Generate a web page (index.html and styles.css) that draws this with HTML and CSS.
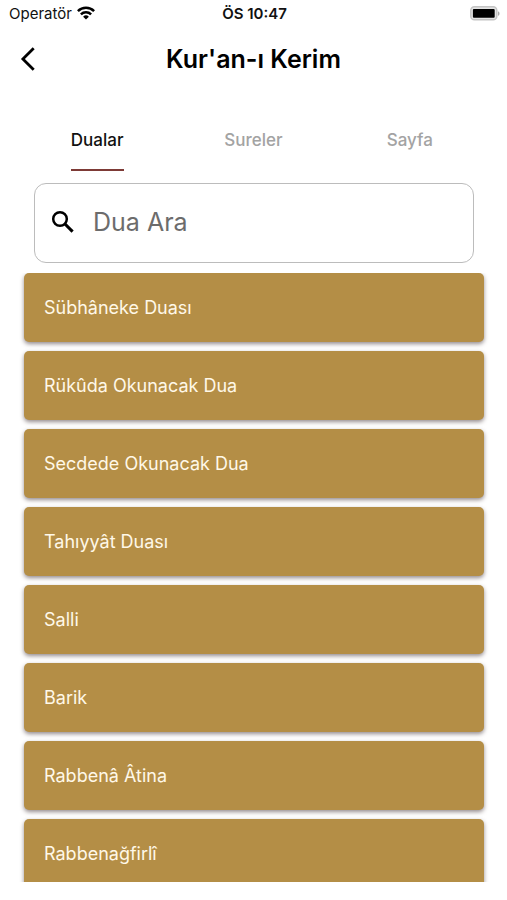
FILE: index.html
```html
<!DOCTYPE html>
<html lang="tr">
<head>
<meta charset="utf-8">
<meta name="viewport" content="width=device-width, initial-scale=1">
<title>Kur'an-ı Kerim</title>
<link rel="stylesheet" href="styles.css">
</head>
<body>
<div class="status">
  <div class="carrier">
    <span>Operatör</span>
    <svg width="18" height="14" viewBox="0 0 18 14" fill="none" stroke="#000" stroke-width="2.5" aria-hidden="true">
      <path d="M.9 5.1a11.5 11.5 0 0 1 16.2 0"/>
      <path d="M3.9 8.3a7.3 7.3 0 0 1 10.2 0"/>
      <path d="M9 13.6 6.1 10.7a4.1 4.1 0 0 1 5.8 0Z" fill="#000" stroke="none"/>
    </svg>
  </div>
  <div class="clock">ÖS 10:47</div>
  <div class="battery">
    <svg width="30" height="15" viewBox="0 0 30 15" aria-hidden="true">
      <rect x=".8" y=".8" width="26" height="13" rx="3.6" fill="#e4e4e4" stroke="#c4c4c4" stroke-width="1.5"/>
      <rect x="2.9" y="2.9" width="21.8" height="8.8" rx="1" fill="#000"/>
      <path d="M28 5.2c2 .8 2 3.8 0 4.6Z" fill="#aaa"/>
    </svg>
  </div>
</div>
<header class="bar">
  <button class="back" type="button" aria-label="Geri">
    <svg width="16" height="24" viewBox="0 0 16 24" fill="none" stroke="#000" stroke-width="2.8" aria-hidden="true"><path d="M13.7 1.2 2.9 12l10.8 10.8"/></svg>
  </button>
  <h1>Kur'an-ı Kerim</h1>
</header>
<nav class="tabs">
  <a class="tab active" href="#dualar" aria-current="page">Dualar</a>
  <a class="tab" href="#sureler">Sureler</a>
  <a class="tab" href="#sayfa">Sayfa</a>
</nav>
<label class="search">
  <svg width="24" height="24" viewBox="0 0 24 24" fill="none" stroke="#000" aria-hidden="true">
    <circle cx="9" cy="9" r="6.8" stroke-width="2.5"/>
    <path d="m14 14 7.6 7.6" stroke-width="3.1"/>
  </svg>
  <input type="search" placeholder="Dua Ara" aria-label="Dua Ara">
</label>
<main class="list" id="dualar">
  <button class="card" type="button">Sübhâneke Duası</button>
  <button class="card" type="button">Rükûda Okunacak Dua</button>
  <button class="card" type="button">Secdede Okunacak Dua</button>
  <button class="card" type="button">Tahıyyât Duası</button>
  <button class="card" type="button">Salli</button>
  <button class="card" type="button">Barik</button>
  <button class="card" type="button">Rabbenâ Âtina</button>
  <button class="card" type="button">Rabbenağfirlî</button>
</main>
</body>
</html>
```
FILE: styles.css
```css
* {
  box-sizing: border-box;
}

body {
  margin: 0;
  height: 100vh;
  padding-bottom: 18px;
  display: flex;
  flex-direction: column;
  overflow: hidden;
  background: #fff;
  color: #000;
  font-family: Inter, "Liberation Sans", sans-serif;
}

button {
  border: 0;
  font: inherit;
  cursor: pointer;
}

.status {
  flex: none;
  display: grid;
  grid-template-columns: 1fr auto 1fr;
  align-items: center;
  height: 26px;
  padding: 0 7px 0 9px;
  font-size: 15px;
  color: #111;
}

.carrier {
  display: flex;
  align-items: center;
  gap: 5px;
}

.clock {
  font-weight: 600;
}

.battery {
  display: flex;
  justify-content: flex-end;
}

.bar {
  flex: none;
  display: grid;
  grid-template-columns: 56px 1fr 56px;
  align-items: center;
  height: 66px;
}

.back {
  display: flex;
  justify-content: center;
  padding: 12px;
  background: none;
}

h1 {
  margin: 0;
  font-size: 25px;
  font-weight: 600;
  text-align: center;
}

.tabs {
  flex: none;
  display: grid;
  grid-template-columns: repeat(3, 1fr);
  justify-items: center;
  margin-top: 18px;
  padding: 0 19px;
}

.tab {
  height: 61px;
  font-size: 17px;
  font-weight: 500;
  line-height: 60px;
  color: #a3a3a3;
  text-decoration: none;
}

.tab.active {
  color: #111;
  border-bottom: 2px solid #7d3a36;
}

.search {
  flex: none;
  display: flex;
  align-items: center;
  gap: 18px;
  height: 80px;
  margin: 12px 33px 10px 34px;
  padding: 0 16px 2px;
  border: 1px solid #bcbcbc;
  border-radius: 12px;
}

.search svg {
  flex: none;
}

.search input {
  flex: 1;
  min-width: 0;
  padding: 0;
  border: 0;
  outline: 0;
  background: none;
  color: #111;
  font: inherit;
  font-size: 25px;
}

.search input::placeholder {
  color: #6c6c6c;
  opacity: 1;
}

.list {
  flex: 1;
  min-height: 0;
  display: flex;
  flex-direction: column;
  gap: 9px;
  padding: 0 23px 0 24px;
  overflow: hidden;
}

.card {
  flex: none;
  height: 69px;
  padding: 0 20px;
  border-radius: 5px;
  background: #b48e46;
  box-shadow: 0 2px 4px rgba(60, 45, 50, 0.55);
  color: #fff8e8;
  font-size: 18px;
  text-align: left;
}
```
